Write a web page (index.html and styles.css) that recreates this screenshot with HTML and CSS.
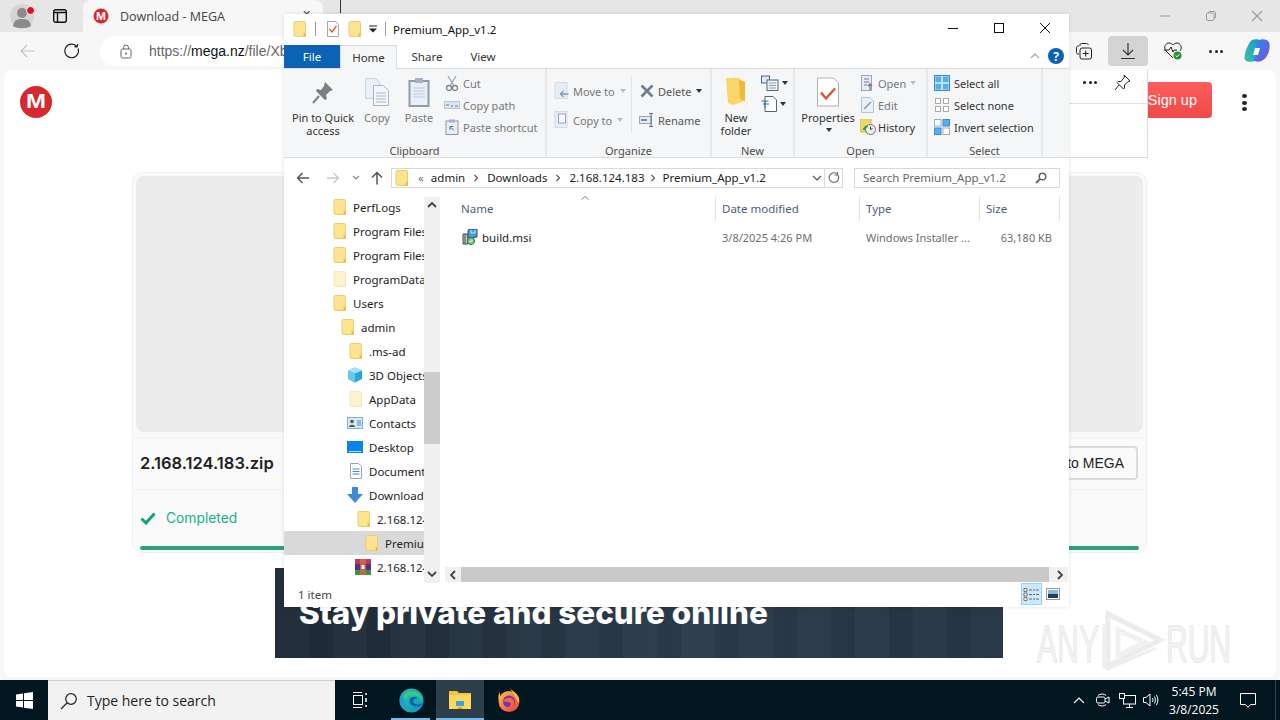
FILE: index.html
```html
<!DOCTYPE html>
<html lang="en">
<head>
<meta charset="utf-8">
<title>Download - MEGA</title>
<link rel="stylesheet" href="styles.css">
</head>
<body>
<svg class="defs" width="0" height="0">
  <symbol id="folder" viewBox="0 0 14 16"><path d="M1 1.500C1 1 1.400.6 2 .6h9.500c.6 0 1 .4 1 1V15.400H2c-.6 0-1-.4-1-1z" fill="#fde48f" stroke="#eccb74"/><path d="M10.500 15.400V12.500l2-1v3.900z" fill="#e8b94c"/></symbol>
  <symbol id="folderlight" viewBox="0 0 14 16"><path d="M1 1.500C1 1 1.400.6 2 .6h9.500c.6 0 1 .4 1 1V15.400H2c-.6 0-1-.4-1-1z" fill="#fff3cf" stroke="#f4e4b8"/></symbol>
  <symbol id="chev" viewBox="0 0 8 8"><path d="M2.500 1l3 3-3 3" fill="none" stroke="#555" stroke-width="1.200"/></symbol>
</svg>

<div class="browser">
  <header class="tabstrip">
    <div class="profile">
      <svg width="26" height="26" viewBox="0 0 26 26"><circle cx="13" cy="13" r="12" fill="#d4d4d4"/><circle cx="13" cy="10" r="5" fill="#8a8a8a"/><path d="M4 23c1-6 4-7 9-7s8 1 9 7c-5 3-13 3-18 0z" fill="#8a8a8a"/></svg>
      <span class="profile-dot"></span>
    </div>
    <svg class="tabs-icon" width="16" height="16" viewBox="0 0 16 16"><rect x="1.700" y="1.700" width="12.600" height="12.600" rx="2" fill="none" stroke="#111" stroke-width="1.400"/><path d="M1.700 4.500h12.600M5.500 4.500v9.500" stroke="#111" stroke-width="1.400"/></svg>
    <div class="tab">
      <svg width="16" height="16" viewBox="0 0 16 16"><circle cx="8" cy="8" r="7.500" fill="#d9272e"/><text x="3" y="11.500" textLength="10" lengthAdjust="spacingAndGlyphs" class="m-small">M</text></svg>
      <span class="tab-title">Download - MEGA</span>
      <span class="tab-close">✕</span>
    </div>
    <span class="tab-sep"></span>
    <div class="wincontrols">
      <svg width="12" height="12" viewBox="0 0 12 12"><path d="M1 6h10" stroke="#9a9a9a"/></svg>
      <svg width="12" height="12" viewBox="0 0 12 12"><rect x="1.500" y="3" width="7.500" height="7.500" rx="1.500" fill="none" stroke="#9a9a9a"/><path d="M3.500 3V2.500c0-.6.400-1 1-1h4.500c1 0 1.500.5 1.500 1.500v4.500c0 .6-.4 1-1 1" fill="none" stroke="#9a9a9a"/></svg>
      <svg width="12" height="12" viewBox="0 0 12 12"><path d="M1 1l10 10M11 1L1 11" stroke="#9a9a9a" stroke-width="1.100"/></svg>
    </div>
  </header>

  <nav class="toolbar">
    <svg class="tb-back" width="16" height="14" viewBox="0 0 16 14"><path d="M15 7H1M7 1L1 7l6 6" fill="none" stroke="#c4c4c4" stroke-width="1.200"/></svg>
    <svg class="tb-reload" width="16" height="16" viewBox="0 0 16 16"><path d="M13.500 3.500V.9M13.500 3.800h-3M14 5.500A6.800 6.800 0 1 1 12.800 3.500" fill="none" stroke="#222" stroke-width="1.200"/></svg>
    <div class="omnibox">
      <svg width="12" height="15" viewBox="0 0 12 15"><rect x="1" y="5" width="10" height="9" rx="1.500" fill="none" stroke="#666"/><path d="M3.500 5V3.500a2.500 2.500 0 0 1 5 0V5" fill="none" stroke="#666"/><circle cx="6" cy="9.500" r="1" fill="#666"/></svg>
      <span class="url"><span class="url-dim">https://</span>mega.nz<span class="url-dim">/file/XbExample</span></span>
    </div>
    <div class="tb-right">
      <svg class="tb-coll" width="18" height="18" viewBox="0 0 18 18"><path d="M5 4V3c0-1 .6-1.500 1.500-1.500h5c1 0 1.500.5 2 1.500M4 12H3c-1 0-1.500-.6-1.500-1.500v-5C1.500 4.500 2.500 4 4 4" fill="none" stroke="#222"/><rect x="5" y="6" width="11.500" height="11" rx="2" fill="none" stroke="#222"/><path d="M10.700 8.500v6M7.700 11.500h6" stroke="#222"/></svg>
      <div class="tb-dl"><svg width="16" height="18" viewBox="0 0 16 18"><path d="M8 1v12M3 8l5 5 5-5M1 16.500h14" fill="none" stroke="#333" stroke-width="1.200"/></svg></div>
      <svg class="tb-health" width="20" height="20" viewBox="0 0 20 20"><path d="M10 17L3 10C0 6 3 2 6 2c2 0 3 1 4 2 1-1 2-2 4-2 3 0 6 4 3 8" fill="none" stroke="#222"/><path d="M1 9h5l2-3 2 5 1-2h3" fill="none" stroke="#222"/><circle cx="14.500" cy="14.500" r="4" fill="#2f8f3f"/><path d="M12.700 14.500l1.300 1.300 2.300-2.500" fill="none" stroke="#fff"/></svg>
      <span class="dots"><i></i><i></i><i></i></span>
      <svg class="tb-copilot" width="26" height="24" viewBox="0 0 26 24"><defs><linearGradient id="cpa" x1="0" y1="1" x2="1" y2="0"><stop offset="0" stop-color="#36c5a0"/><stop offset="1" stop-color="#1a8fe0"/></linearGradient><linearGradient id="cpb" x1="0" y1="0" x2="1" y2="1"><stop offset="0" stop-color="#2a8ee8"/><stop offset="1" stop-color="#7a4ee0"/></linearGradient></defs><path d="M8 1c3-1 7-1 9 1l-4 18c-1 3-10 4-12 1-2-4 3-17 7-20z" fill="url(#cpa)"/><path d="M14 2c3-3 9-2 11 1 2 6-1 15-6 18-2 2-7 2-9 1z" fill="url(#cpb)"/><path d="M11 9h5l-2 7H9z" fill="#fff"/></svg>
    </div>
  </nav>

  <main class="page">
    <div class="page-head">
      <svg class="logo" width="32" height="32" viewBox="0 0 32 32"><circle cx="16" cy="16" r="16" fill="#d9272e"/><text x="6" y="22" textLength="20" lengthAdjust="spacingAndGlyphs" class="m-big">M</text></svg>
      <div class="head-right">
        <button class="signup">Sign up</button>
        <span class="kebab"><i></i><i></i><i></i></span>
      </div>
    </div>

    <section class="card">
      <div class="preview"></div>
      <div class="file-row">
        <strong class="filename">2.168.124.183.zip</strong>
        <button class="import">Import to MEGA</button>
      </div>
      <div class="status-row">
        <svg width="16" height="13" viewBox="0 0 16 13"><path d="M1.500 6.500l4.500 4.500 8.500-9.500" fill="none" stroke="#10a37f" stroke-width="3"/></svg>
        <span class="completed">Completed</span>
      </div>
      <div class="progress"></div>
    </section>

    <section class="ad">
      <h2>Stay private and secure online</h2>
    </section>

    <svg class="watermark" width="210" height="66" viewBox="0 0 210 66">
      <g class="wm-text">
        <text x="1" y="54" textLength="62" lengthAdjust="spacingAndGlyphs">ANY</text>
        <text x="130" y="54" textLength="65" lengthAdjust="spacingAndGlyphs">RUN</text>
      </g>
      <path d="M72 6v52l52-26z" fill="none" stroke="#ececec" stroke-width="5"/>
      <path d="M82 22v26l26-14z" fill="none" stroke="#f1f1f1" stroke-width="5"/>
      <path d="M68 16v44M70 62l50-22" fill="none" stroke="#eee" stroke-width="3"/>
    </svg>

    <aside class="dl-flyout">
      <div class="fly-head">
        <span class="dots small"><i></i><i></i><i></i></span>
        <svg width="17" height="17" viewBox="0 0 17 17"><path d="M10 1l6 6-2 .5-3.500 3.500v3l-1 1-6.500-6.500 1-1h3L10.500 3z" fill="none" stroke="#222"/><path d="M5 11l-4 5" stroke="#222"/></svg>
      </div>
    </aside>
  </main>
</div>

<footer class="taskbar">
  <div class="start"><svg width="17" height="17" viewBox="0 0 17 17"><path d="M0 2.500l7-1v6.500H0zM8 1.300L17 0v8H8zM0 9h7v6.500l-7-1zM8 9h9v8l-9-1.300z" fill="#fff"/></svg></div>
  <div class="search">
    <svg width="18" height="18" viewBox="0 0 18 18"><circle cx="11" cy="7" r="5.300" fill="none" stroke="#222" stroke-width="1.200"/><path d="M7 11l-6 6" stroke="#222" stroke-width="1.200"/></svg>
    <span>Type here to search</span>
  </div>
  <div class="task-icons">
    <div class="task-btn tv"><svg width="16" height="16" viewBox="0 0 16 16"><path d="M1 .5h9M1 15.500h9" stroke="#fff"/><rect x="1.500" y="3.500" width="9" height="9" fill="none" stroke="#fff"/><path d="M14 1v2M14 6v4M14 13v2" stroke="#fff" stroke-width="1.500"/></svg></div>
    <div class="task-btn running edge"><svg width="25" height="25" viewBox="0 0 26 26"><defs><linearGradient id="ega" x1="0" y1="0" x2="1" y2="1"><stop offset="0" stop-color="#2fd07d"/><stop offset="1" stop-color="#0f8fd6"/></linearGradient></defs><circle cx="13" cy="13" r="12.500" fill="url(#ega)"/><path d="M25 15c-1 4-6 5-9 4-5-1-7-6-3-9 2-1 5-1 6 1-5-1-6 5-1 6 3 .5 6-.5 7-2z" fill="#0b5fb5"/><path d="M1 12C2 4 11 0 18 3c4 2 7 6 7 10-2-4-7-7-12-5-5 1-8 8-5 14C4 21 0 17 1 12z" fill="#1a9fd9"/><path d="M5 7c4-5 12-5 16-1 3 3 4 6 3 8-2-5-7-7-11-6-3 .5-6 3-6.500 6C5 12 4 9 5 7z" fill="#35c98a"/></svg></div>
    <div class="task-btn active"><svg width="24" height="22" viewBox="0 0 24 22"><path d="M1 2h8l2 2h12v16H1z" fill="#f4c33f"/><path d="M1 6h22v14H1z" fill="#fbd75b"/><rect x="8" y="12" width="8" height="5" fill="#3f9fe0"/><rect x="10" y="18" width="4" height="2" fill="#e8a020"/></svg></div>
    <div class="task-btn ff"><svg width="24" height="24" viewBox="0 0 24 24"><defs><linearGradient id="ffa" x1="0" y1="0" x2="1" y2="1"><stop offset="0" stop-color="#ffc43a"/><stop offset="1" stop-color="#f0304a"/></linearGradient></defs><circle cx="12" cy="13.500" r="10.500" fill="url(#ffa)"/><path d="M13 0c2 3 6 4 8 8 2 3 1 6 0 7-1-4-5-9-8-15zM3 4c0 3 0 5 1 7L2 13C1 10 1 7 3 4z" fill="#ffb52e"/><circle cx="12" cy="13.500" r="6" fill="#6e33c4"/><path d="M6 13c2-3 6-4 8-3 3 1 4 5 2 8-2 2-6 3-8 1 3 1 6-1 6-3 0-2-3-2-8-3z" fill="#f76a34"/></svg></div>
  </div>
  <div class="tray">
    <svg width="12" height="8" viewBox="0 0 12 8"><path d="M1 7l5-5 5 5" fill="none" stroke="#fff" stroke-width="1.100"/></svg>
    <svg width="14" height="16" viewBox="0 0 14 16"><path d="M2 3.500a6 6 0 0 1 8 0M2 12.500a6 6 0 0 0 8 0" fill="none" stroke="#fff"/><rect x=".5" y="5" width="8.500" height="6" rx="1.500" fill="none" stroke="#fff"/><path d="M9 7l4-2v6l-4-2" fill="none" stroke="#fff"/></svg>
    <svg width="17" height="15" viewBox="0 0 17 15"><rect x="4.500" y="2.500" width="12" height="8.500" fill="none" stroke="#fff"/><path d="M10.500 11v3M7 14.500h7" stroke="#fff"/><rect x=".5" y=".5" width="5" height="5" fill="#021620" stroke="#fff"/></svg>
    <svg width="16" height="14" viewBox="0 0 16 14"><path d="M.5 4.500h2.500L7 1v12L3 9.500H.5z" fill="none" stroke="#fff"/><path d="M9.500 5c.7 1.300.7 2.700 0 4M11.500 3.500c1.200 2.200 1.200 4.800 0 7M13.500 2c1.800 3.200 1.800 6.800 0 10" fill="none" stroke="#fff"/></svg>
  </div>
  <div class="clock"><span>5:45 PM</span><span>3/8/2025</span></div>
  <div class="notif"><svg width="16" height="15" viewBox="0 0 16 15"><path d="M.5.500h15v11h-5L8 14.300 5.500 11.500h-5z" fill="none" stroke="#fff"/></svg></div>
</footer>

<div class="explorer">
  <div class="titlebar">
    <svg class="ti" width="14" height="16"><use href="#folder"/></svg>
    <span class="qa-sep"></span>
    <svg class="qa-check" width="14" height="16" viewBox="0 0 14 16"><path d="M1.500.5h8l3 3v12h-11z" fill="#fff" stroke="#a8a8a8"/><path d="M3.500 8l2.500 3 4.500-6" fill="none" stroke="#d9552f" stroke-width="1.300"/></svg>
    <svg class="ti qa-folder" width="14" height="16"><use href="#folder"/></svg>
    <svg class="qa-caret" width="8" height="8" viewBox="0 0 8 8"><path d="M0 1h8" stroke="#222"/><path d="M0 3.500h8L4 7.500z" fill="#222"/></svg>
    <span class="qa-sep"></span>
    <span class="win-title">Premium_App_v1.2</span>
    <div class="win-btns">
      <svg width="12" height="12" viewBox="0 0 12 12"><path d="M1 6.500h10" stroke="#111"/></svg>
      <svg width="12" height="12" viewBox="0 0 12 12"><rect x="1.500" y="1.500" width="9" height="9" fill="none" stroke="#111"/></svg>
      <svg width="12" height="12" viewBox="0 0 12 12"><path d="M1 1l10 10M11 1L1 11" stroke="#111"/></svg>
    </div>
  </div>

  <div class="ribbon-tabs">
    <span class="rt file">File</span>
    <span class="rt home">Home</span>
    <span class="rt share">Share</span>
    <span class="rt view">View</span>
    <svg class="collapse" width="10" height="6" viewBox="0 0 10 6"><path d="M1 5l4-4 4 4" fill="none" stroke="#aaa" stroke-width="1.300"/></svg>
    <span class="help">?</span>
  </div>

  <div class="ribbon">
    <div class="group g-clip">
      <div class="g-body">
        <div class="big pin">
          <svg width="24" height="26" viewBox="0 0 24 26"><path d="M14 2l8 8-3 1-4 4 1 4-2 1-9-9 1-2 4 1 3-4z" fill="#7b7f85"/><path d="M8 16l-6 7" stroke="#7b7f85" stroke-width="2"/></svg>
          <span>Pin to Quick<br>access</span>
        </div>
        <div class="big copy dim">
          <svg width="26" height="30" viewBox="0 0 26 30"><path d="M1.500 1.500h10l4 4v16h-14z" fill="#eaf0f7" stroke="#c9d3de"/><path d="M9.500 8.500h10l5 5v15h-15z" fill="#f4f7fb" stroke="#a9b6c5"/><path d="M12 16h10M12 19h10M12 22h10M12 25h10" stroke="#a9b6c5"/></svg>
          <span>Copy</span>
        </div>
        <div class="big paste dim">
          <svg width="22" height="30" viewBox="0 0 22 30"><rect x="1.500" y="4" width="19" height="25" fill="#e8eff8" stroke="#8d9bab" stroke-width="2"/><rect x="7" y="1" width="8" height="5" fill="#a7b3c1"/><path d="M5 11h12M5 14h12M5 17h12M5 20h12" stroke="#b9cbe0"/></svg>
          <span>Paste</span>
        </div>
        <div class="smalls s-clip">
          <div class="sm dim"><svg width="14" height="16" viewBox="0 0 14 16"><path d="M3 1l5.500 9M11 1L5.500 10" stroke="#9aa5b1" stroke-width="1.300"/><circle cx="4" cy="13" r="2.500" fill="none" stroke="#7a8694" stroke-width="1.300"/><circle cx="10" cy="13" r="2.500" fill="none" stroke="#7a8694" stroke-width="1.300"/></svg><span>Cut</span></div>
          <div class="sm dim"><svg width="16" height="10" viewBox="0 0 16 10"><rect x=".5" y="1.500" width="15" height="7" fill="#dbe6f2" stroke="#b8c5d3"/><path d="M2 5h3M7 6h2M11 6h3" stroke="#778" stroke-width="1.200"/></svg><span>Copy path</span></div>
          <div class="sm dim"><svg width="14" height="16" viewBox="0 0 14 16"><rect x="1" y="2" width="12" height="13.500" fill="#e7eef7" stroke="#8a98a8"/><rect x="4" y=".5" width="6" height="3" fill="#a7b3c1"/><path d="M5 11V7.500h3M6 8.500l3 3" fill="none" stroke="#4a6a90"/></svg><span>Paste shortcut</span></div>
        </div>
      </div>
      <div class="g-label">Clipboard</div>
    </div>

    <div class="group g-org">
      <div class="g-body">
        <div class="smalls two s-org1">
          <div class="sm dim"><svg width="15" height="18" viewBox="0 0 15 18"><rect x=".5" y=".5" width="12" height="16" fill="#e7edf5" stroke="#d4dce6"/><path d="M14 12H6M9 9l-3 3 3 3" fill="none" stroke="#7f9bbd" stroke-width="1.300"/></svg><span>Move to</span><i class="caret light"></i></div>
          <div class="sm dim"><svg width="15" height="18" viewBox="0 0 15 18"><rect x=".5" y=".5" width="12" height="16" fill="#e7edf5" stroke="#d4dce6"/><rect x="4" y="3" width="7" height="9" fill="#f5f7fa" stroke="#99a7b7"/></svg><span>Copy to</span><i class="caret light"></i></div>
        </div>
        <span class="inner-sep"></span>
        <div class="smalls two s-org2">
          <div class="sm semi"><svg width="14" height="14" viewBox="0 0 14 14"><path d="M1.500 1.500l11 11M12.500 1.500l-11 11" stroke="#6e7f92" stroke-width="2.600"/></svg><span>Delete</span><i class="caret"></i></div>
          <div class="sm semi"><svg width="16" height="14" viewBox="0 0 16 14"><rect x=".5" y="3.500" width="12" height="7" fill="#e2e9f2" stroke="#9aa8b8"/><path d="M12 .5v13M10 .5h4M10 13.500h4" stroke="#5f7088"/><path d="M2 7h6" stroke="#5f7088" stroke-width="1.500"/></svg><span>Rename</span></div>
        </div>
      </div>
      <div class="g-label">Organize</div>
    </div>

    <div class="group g-new">
      <div class="g-body">
        <div class="big newf">
          <svg width="22" height="28" viewBox="0 0 22 28"><path d="M1 0h13l3 3h3v20l-12 4-5-2z" fill="#fcd569"/><path d="M14 2l6 2v19l-5-2z" fill="#f0b83f"/></svg>
          <span>New<br>folder</span>
        </div>
        <div class="new-smalls">
          <div class="ns"><svg width="18" height="16" viewBox="0 0 18 16"><rect x=".5" y="1" width="8" height="7" fill="#dfe9f3" stroke="#53647a"/><rect x="6" y="5" width="11" height="10.500" fill="#eef3f8" stroke="#53647a"/><path d="M8 8h7M8 10.500h7M8 13h7" stroke="#91a0b1"/></svg><i class="caret"></i></div>
          <div class="ns"><svg width="16" height="16" viewBox="0 0 16 16"><path d="M4 .5h8l3.500 3.500v11.500H4z" fill="#fff" stroke="#53647a"/><path d="M.5 5h7M2 8h6M4 5v7" stroke="#2a70b8"/></svg><i class="caret"></i></div>
        </div>
      </div>
      <div class="g-label">New</div>
    </div>

    <div class="group g-open">
      <div class="g-body">
        <div class="big props">
          <svg width="22" height="29" viewBox="0 0 22 29"><path d="M.5.500h16l5 5v23H.5z" fill="#fff" stroke="#b0b0b0"/><path d="M4 15l5 6 9-10" fill="none" stroke="#d9552f" stroke-width="2.400"/></svg>
          <span>Properties</span>
          <i class="caret mid"></i>
        </div>
        <div class="smalls s-open">
          <div class="sm dim"><svg width="14" height="16" viewBox="0 0 14 16"><rect x=".5" y=".5" width="10" height="15" fill="#e5ecf4" stroke="#9aa8b8"/><path d="M3 4h5M3 7h5M3 10h3" stroke="#6d7e92"/><path d="M9 15V9M7 11l2-2 2 2" fill="none" stroke="#6d7e92" stroke-width="1.300"/></svg><span>Open</span><i class="caret light"></i></div>
          <div class="sm dim"><svg width="14" height="16" viewBox="0 0 14 16"><path d="M.5.500h8.500l3.500 3.500v11.500H.5z" fill="#eaf0f7" stroke="#b6c2cf"/><path d="M3 12l7-7" stroke="#8296ad" stroke-width="1.500"/></svg><span>Edit</span></div>
          <div class="sm"><svg width="16" height="16" viewBox="0 0 16 16"><rect x="0" y="0" width="11" height="13" fill="#f0d76c" stroke="#d3b94f"/><circle cx="10.500" cy="10.500" r="5" fill="#e8eef0" stroke="#6a7684"/><path d="M3.500 11a7 7 0 0 1 4-4" fill="none" stroke="#2f9d42" stroke-width="2"/><path d="M10.500 7.500v3l2-1" fill="none" stroke="#444"/></svg><span>History</span></div>
        </div>
      </div>
      <div class="g-label">Open</div>
    </div>

    <div class="group g-sel">
      <div class="g-body">
        <div class="smalls s-sel">
          <div class="sm"><svg width="16" height="16" viewBox="0 0 16 16"><rect x=".5" y=".5" width="15" height="15" fill="#bfe0f9" stroke="#3a8cd0"/><rect x="1.500" y="1.500" width="5.500" height="5.500" fill="#55aef0"/><rect x="9" y="1.500" width="5.500" height="5.500" fill="#55aef0"/><rect x="1.500" y="9" width="5.500" height="5.500" fill="#55aef0"/><rect x="9" y="9" width="5.500" height="5.500" fill="#55aef0"/></svg><span>Select all</span></div>
          <div class="sm"><svg width="16" height="16" viewBox="0 0 16 16"><rect x="1.500" y="1.500" width="5" height="5" fill="#fff" stroke="#aaa"/><rect x="9.500" y="1.500" width="5" height="5" fill="#fff" stroke="#aaa"/><rect x="1.500" y="9.500" width="5" height="5" fill="#fff" stroke="#aaa"/><rect x="9.500" y="9.500" width="5" height="5" fill="#fff" stroke="#aaa"/></svg><span>Select none</span></div>
          <div class="sm"><svg width="16" height="16" viewBox="0 0 16 16"><rect x="9" y=".5" width="6.500" height="6.500" fill="#55aef0" stroke="#3a8cd0"/><rect x=".5" y="9" width="6.500" height="6.500" fill="#55aef0" stroke="#3a8cd0"/><rect x=".5" y=".5" width="6.500" height="6.500" fill="#fff" stroke="#8bb4d8"/><rect x="9" y="9" width="6.500" height="6.500" fill="#fff" stroke="#aaa"/></svg><span>Invert selection</span></div>
        </div>
      </div>
      <div class="g-label">Select</div>
    </div>
  </div>

  <div class="addr-row">
    <svg class="nav-back" width="14" height="12" viewBox="0 0 14 12"><path d="M13 6H1.500M6.500 1l-5 5 5 5" fill="none" stroke="#555" stroke-width="1.400"/></svg>
    <svg class="nav-fwd" width="14" height="12" viewBox="0 0 14 12"><path d="M1 6h11.500M7.500 1l5 5-5 5" fill="none" stroke="#c8c8c8" stroke-width="1.400"/></svg>
    <svg class="nav-down" width="8" height="6" viewBox="0 0 8 6"><path d="M1 1l3 3 3-3" fill="none" stroke="#888" stroke-width="1.200"/></svg>
    <svg class="nav-up" width="12" height="14" viewBox="0 0 12 14"><path d="M6 13.500V1.500M1 6.500l5-5 5 5" fill="none" stroke="#555" stroke-width="1.500"/></svg>
    <div class="addr">
      <svg width="14" height="16"><use href="#folder"/></svg>
      <span class="crumb-more">«</span>
      <span>admin</span><svg class="c" width="8" height="8"><use href="#chev"/></svg>
      <span>Downloads</span><svg class="c" width="8" height="8"><use href="#chev"/></svg>
      <span>2.168.124.183</span><svg class="c c-last" width="8" height="8"><use href="#chev"/></svg>
      <span>Premium_App_v1.2</span>
      <svg class="addr-drop" width="10" height="6" viewBox="0 0 10 6"><path d="M1 1l4 4 4-4" fill="none" stroke="#555" stroke-width="1.200"/></svg>
      <span class="addr-refresh"><svg width="12" height="13" viewBox="0 0 12 13"><path d="M9.500 1v3h-3M10 4a4.800 4.800 0 1 1-1.500-1.500" fill="none" stroke="#666" stroke-width="1.100"/></svg></span>
    </div>
    <div class="searchbox">
      <span>Search Premium_App_v1.2</span>
      <svg width="12" height="12" viewBox="0 0 12 12"><circle cx="7.500" cy="4.500" r="3.300" fill="none" stroke="#666" stroke-width="1.500"/><path d="M5 7l-4 4" stroke="#666" stroke-width="1.800"/></svg>
    </div>
  </div>

  <div class="body">
    <div class="tree">
      <div class="tr l0"><svg width="14" height="16"><use href="#folder"/></svg><span>PerfLogs</span></div>
      <div class="tr l0"><svg width="14" height="16"><use href="#folder"/></svg><span>Program Files</span></div>
      <div class="tr l0"><svg width="14" height="16"><use href="#folder"/></svg><span>Program Files</span></div>
      <div class="tr l0"><svg width="14" height="16"><use href="#folderlight"/></svg><span>ProgramData</span></div>
      <div class="tr l0"><svg width="14" height="16"><use href="#folder"/></svg><span>Users</span></div>
      <div class="tr l1"><svg width="14" height="16"><use href="#folder"/></svg><span>admin</span></div>
      <div class="tr l2"><svg width="14" height="16"><use href="#folder"/></svg><span>.ms-ad</span></div>
      <div class="tr l2w"><svg width="16" height="16" viewBox="0 0 16 16"><path d="M8 .5l7 3v8.500l-7 3.500-7-3.500V3.500z" fill="#2aa5d6"/><path d="M1 3.500l7 3 7-3-7-3z" fill="#a7e3f5"/><path d="M1 3.500l7 3v9l-7-3.500z" fill="#62c9e8"/></svg><span>3D Objects</span></div>
      <div class="tr l2"><svg width="14" height="16"><use href="#folderlight"/></svg><span>AppData</span></div>
      <div class="tr l2w"><svg width="16" height="12" viewBox="0 0 16 12"><rect x=".5" y=".5" width="15" height="11" fill="#d4e8f7" stroke="#7fb2d9"/><circle cx="5" cy="4.500" r="1.800" fill="#555"/><path d="M2 10c0-3 6-3 6 0z" fill="#555"/><path d="M10 4h4M10 6h4M10 8h4" stroke="#3f8fd0"/></svg><span>Contacts</span></div>
      <div class="tr l2w"><svg width="16" height="12" viewBox="0 0 16 12"><rect x="0" y="0" width="16" height="12" fill="#0a84e8"/><path d="M2 10.500h12" stroke="#bfe0f9"/></svg><span>Desktop</span></div>
      <div class="tr l2"><svg width="14" height="16" viewBox="0 0 14 16"><path d="M1.500.5h8l3 3v12h-11z" fill="#fff" stroke="#9aa5b1"/><path d="M3.500 6h7M3.500 8.500h7M3.500 11h7" stroke="#3f8fd0"/></svg><span>Document</span></div>
      <div class="tr l2w"><svg width="16" height="16" viewBox="0 0 16 16"><path d="M5 0h6v7h5l-8 9-8-9h5z" fill="#3d8bd8"/></svg><span>Download</span></div>
      <div class="tr l3"><svg width="14" height="16"><use href="#folder"/></svg><span>2.168.124.183</span></div>
      <div class="tr l4 sel"><svg width="14" height="16"><use href="#folder"/></svg><span>Premium_App_v1.2</span></div>
      <div class="tr l3w"><svg width="16" height="16" viewBox="0 0 16 16"><rect width="16" height="5" fill="#b53a66"/><rect y="5" width="16" height="6" fill="#5a2f86"/><rect y="11" width="16" height="5" fill="#3a8f4a"/><rect x="5" width="6" height="16" fill="#d96a3a" opacity=".8"/><rect x="6.500" y="6" width="3" height="4" fill="#fff"/></svg><span>2.168.124.183.zip</span></div>
    </div>
    <div class="vscroll">
      <svg width="10" height="6" viewBox="0 0 10 6"><path d="M1 5l4-4 4 4" fill="none" stroke="#444" stroke-width="1.800"/></svg>
      <div class="vthumb"></div>
      <svg width="10" height="6" viewBox="0 0 10 6"><path d="M1 1l4 4 4-4" fill="none" stroke="#444" stroke-width="1.800"/></svg>
    </div>
    <div class="list">
      <div class="list-head">
        <span class="h-name">Name<svg class="sort" width="8" height="4" viewBox="0 0 8 4"><path d="M.5 3.500L4 .5l3.500 3" fill="none" stroke="#888"/></svg></span>
        <span class="h-date">Date modified</span>
        <span class="h-type">Type</span>
        <span class="h-size">Size</span>
      </div>
      <div class="list-row">
        <span class="c-name">
          <svg width="16" height="16" viewBox="0 0 16 16"><path d="M1 5h5v10H1z" fill="#c4c4c4" stroke="#444"/><path d="M3 5v10" stroke="#555"/><path d="M6 1l3-1h6v8l-6 1H6z" fill="#3e9fd8" stroke="#35506e"/><path d="M9 1v3h4V1" fill="none" stroke="#cfe6f5"/><circle cx="9" cy="12" r="3.500" fill="#7fd08a" stroke="#2d7a3c"/><path d="M7.500 12l1 1 2-2" fill="none" stroke="#fff"/></svg>
          build.msi
        </span>
        <span class="c-date">3/8/2025 4:26 PM</span>
        <span class="c-type">Windows Installer ...</span>
        <span class="c-size">63,180 KB</span>
      </div>
      <div class="hscroll">
        <svg width="6" height="10" viewBox="0 0 6 10"><path d="M5 1L1 5l4 4" fill="none" stroke="#444" stroke-width="1.800"/></svg>
        <div class="hthumb"></div>
        <svg width="6" height="10" viewBox="0 0 6 10"><path d="M1 1l4 4-4 4" fill="none" stroke="#444" stroke-width="1.800"/></svg>
      </div>
    </div>
  </div>

  <div class="statusbar">
    <span>1 item</span>
    <div class="views">
      <span class="vw on"><svg width="17" height="15" viewBox="0 0 17 15"><path d="M1 1.500h3v3H1zM1 6h3v3H1zM1 10.500h3v3H1z" fill="#fff" stroke="#777"/><path d="M6 3h3M10 3h2M13 3h3M6 7.500h3M10 7.500h2M13 7.500h3M6 12h3M10 12h2M13 12h3" stroke="#667"/></svg></span>
      <span class="vw"><svg width="14" height="12" viewBox="0 0 14 12"><rect x=".5" y=".5" width="13" height="11" fill="#fff" stroke="#8a9aa8"/><rect x="2" y="2" width="10" height="4" fill="#8dbbe0"/><rect x="2" y="6" width="10" height="4" fill="#2a3d50"/></svg></span>
    </div>
  </div>
</div>
</body>
</html>
```
FILE: styles.css
```css
* { box-sizing: border-box; }
html, body { margin: 0; padding: 0; }
body {
  width: 1280px; height: 720px; overflow: hidden; position: relative;
  font-family: "Open Sans", "Noto Sans", sans-serif; font-size: 12px; color: #222;
  background: #f7f7f7;
}
svg { display: block; flex: none; }
.defs { position: absolute; }
button { font-family: inherit; }

/* Browser */
.browser { height: 680px; display: flex; flex-direction: column; }
.tabstrip { height: 32px; background: #e6e6e6; display: flex; align-items: center; position: relative; }
.profile { width: 26px; height: 26px; margin-left: 9px; position: relative; }
.profile-dot { position: absolute; left: 18px; top: 4px; width: 7px; height: 7px; border-radius: 50%; background: #e0101a; border: 1px solid #f6f6f6; box-sizing: content-box; margin: -1px; }
.tabs-icon { margin-left: 17px; }
.tab {
  margin-left: 15px; width: 240px; height: 32px; background: #f7f7f7;
  border-radius: 8px 8px 0 0; display: flex; align-items: center; padding-left: 10px; gap: 11px;
}
.tab-title { font-size: 12.500px; color: #444; }
.tab-close { font-size: 11px; color: #444; margin-left: 66px; margin-top: -6px; }
.tab-sep { width: 1px; height: 13px; background: #333; margin: -19px 0 0 17px; }
.wincontrols { margin-left: auto; width: 104px; margin-right: 17px; display: flex; justify-content: space-between; }
.m-small { font: 700 10px "Liberation Sans", sans-serif; fill: #fff; }
.m-big { font: 700 20px "Liberation Sans", sans-serif; fill: #fff; }

.toolbar { height: 38px; background: #f7f7f7; display: flex; align-items: center; }
.tb-back { margin-left: 20px; }
.tb-reload { margin-left: 28px; }
.omnibox {
  margin-left: 20px; width: 970px; height: 30px; background: #fff; border-radius: 15px;
  display: flex; align-items: center; padding-left: 20px; gap: 17px;
}
.url { font-family: "Liberation Sans", sans-serif; font-size: 14px; color: #111; }
.url-dim { color: #666; }
.tb-right { flex: 1; display: flex; align-items: center; position: relative; padding-left: 5px; }
.tb-coll { margin-left: 0; }
.tb-dl { width: 40px; height: 30px; margin-left: 15px; background: #d4d4d4; border-radius: 4px; display: flex; align-items: center; justify-content: center; }
.tb-health { margin-left: 15px; }
.dots { display: inline-flex; gap: 2.500px; margin-left: 26px; }
.dots i { width: 3px; height: 3px; border-radius: 50%; background: #222; }
.tb-copilot { margin-left: 21px; }

.page { flex: 1; margin: 0 4px 3px; background: #fff; border-radius: 8px 8px 6px 6px; position: relative; overflow: hidden; }
.page-head { height: 88px; padding: 16px 29px 0 16px; display: flex; justify-content: space-between; }
.head-right { display: flex; gap: 30px; align-items: flex-start; margin-top: -4px; }
.signup {
  width: 79px; height: 36px; border: 0; border-radius: 4px; padding: 0;
  background: linear-gradient(#ff5d5d, #f04848); color: #fff;
  font-family: "Liberation Sans", sans-serif; font-size: 14.500px; text-align: right; padding-right: 15px;
}
.kebab { display: flex; flex-direction: column; gap: 2.500px; margin-top: 12px; }
.kebab i { width: 5px; height: 4px; border-radius: 50%; background: #222; }

.card {
  margin: 14px 0 0 128px; width: 1015px; height: 381px; background: #fafafa;
  border: 1px solid #f0f0f0; border-radius: 10px; padding: 3px; display: flex; flex-direction: column;
}
.preview { height: 256px; background: #ececec; border-radius: 8px; flex: none; }
.file-row {
  margin: 5px -3px 0; height: 53px; flex: none; border-top: 1px solid #f1f1f1; border-bottom: 1px solid #f1f1f1;
  display: flex; align-items: center; justify-content: space-between; padding: 0 8px 2px 7px;
}
.filename { font-family: Inter, "Liberation Sans", sans-serif; font-size: 16.500px; font-weight: 600; color: #222; }
.import {
  height: 34px; padding: 0 12px; background: #fafafa; border: 2px solid #dcdcdc; border-radius: 4px;
  font-family: "Liberation Sans", sans-serif; font-size: 14px; color: #222;
}
.status-row { height: 56px; flex: none; padding: 0 5px 0 4px; display: flex; align-items: center; gap: 10px; }
.completed { font-family: Inter, sans-serif; font-size: 13.800px; color: #14b08a; }
.progress { height: 4px; margin: 0 4px; background: #2aa37d; border-radius: 2px; flex: none; }

.ad {
  margin: 15px 0 0 271px; width: 728px; height: 90px; overflow: hidden;
  background:
    repeating-linear-gradient(90deg, rgba(255,255,255,.02) 0 34px, rgba(0,0,0,.04) 34px 58px),
    linear-gradient(90deg, #1f2a37, #2c3b4b 55%, #263545);
  padding: 28px 0 0 24px;
}
.ad h2 { margin: 0; font-family: Inter, sans-serif; font-weight: 800; font-size: 31.400px; line-height: 34px; color: #fff; white-space: nowrap; }

.watermark { position: absolute; left: 1032px; top: 538px; }
.wm-text { font: 400 52px "Liberation Sans", sans-serif; fill: #f3f3f3; stroke: #e6e6e6; stroke-width: 1; }

.dl-flyout {
  position: absolute; right: 128px; top: 0; width: 150px; height: 88px; background: #fff;
  border-right: 1px solid #dcdcdc; border-bottom: 1px solid #dcdcdc; 
}
.fly-head { height: 34px; border-bottom: 1px solid #e0e0e0; display: flex; align-items: center; justify-content: flex-end; gap: 17px; padding: 0 16px 8px 0; }
.dots.small { margin: 0; }

/* Taskbar */
.taskbar { height: 40px; background: #021620; display: flex; align-items: center; position: relative; }
.start { width: 48px; height: 40px; display: flex; align-items: center; justify-content: center; }
.search {
  width: 287px; height: 40px; background: #f2f2f2; border-top: 1px solid #cfcfcf;
  display: flex; align-items: center; padding-left: 12px; gap: 9px;
  font-family: "Open Sans", sans-serif; font-size: 14px; color: #222;
}
.task-icons { display: flex; margin-left: 1px; gap: 1px; }
.task-btn { width: 48px; height: 40px; display: flex; align-items: center; justify-content: center; position: relative; }
.tv { margin-right: 2px; }
.running::after, .active::after { content: ""; position: absolute; left: 4px; right: 5px; bottom: 0; height: 2px; background: #76b9ed; }
.active { background: #2c3e4a; }
.active::after { left: 0; right: 0; }
.tray { margin-left: auto; display: grid; grid-template-columns: repeat(4, 24px); justify-items: center; align-items: center; width: 96px; }
.clock { width: 50px; margin-left: 6px; margin-right: 1px; display: flex; flex-direction: column; align-items: center; color: #fff; font-size: 12px; line-height: 18px; padding-top: 1px; white-space: nowrap; }
.notif { width: 56px; display: flex; justify-content: center; border-right: 1px solid #33434d; height: 40px; align-items: center; margin-right: 4px; }

/* Explorer (floating window on the desktop) */
.explorer {
  position: absolute; left: 284px; top: 14px; width: 785px; height: 593px; background: #fff;
  display: flex; flex-direction: column; box-shadow: 0 0 4px rgba(0,0,0,.12);
  font-family: "Noto Sans", sans-serif; font-size: 11.500px; color: #333;
}
.titlebar { height: 28px; display: flex; align-items: center; padding: 2px 0 0 9px; flex: none; }
.titlebar .win-btns { margin-top: -2px; }
.qa-sep { width: 1px; height: 14px; background: #9a9a9a; margin: 0 0 0 8px; }
.qa-check { margin-left: 10px; }
.qa-folder { margin-left: 8px; }
.qa-caret { margin-left: 7px; }
.titlebar .qa-sep + .win-title { margin-left: 7px; }
.qa-caret + .qa-sep { margin-left: 8px; }
.win-title { color: #111; font-size: 11.500px; }
.win-btns { margin-left: auto; display: flex; gap: 34px; padding-right: 18px; }

.ribbon-tabs { height: 26px; display: flex; align-items: flex-end; position: relative; flex: none; }
.rt { height: 23px; display: flex; align-items: center; justify-content: center; font-size: 11.500px; color: #333; }
.rt.file { width: 56px; background: #0a63b4; color: #fff; }
.rt.home { width: 57px; background: #f5f6f7; border: 1px solid #dadbdc; border-bottom: 0; height: 24px; position: relative; top: 1px; }
.rt.share { width: 60px; }
.rt.view { width: 52px; }
.collapse { margin-left: auto; margin-right: 8px; margin-bottom: 9px; }
.help { width: 16px; height: 16px; border-radius: 50%; background: #0b62b5; color: #fff; font-weight: 700; font-size: 12px; display: flex; align-items: center; justify-content: center; margin-right: 5px; margin-bottom: 4px; }

.ribbon { height: 90px; flex: none; background: #f5f6f7; border-top: 1px solid #dadbdc; border-bottom: 1px solid #dadbdc; display: flex; }
.group { display: flex; flex-direction: column; border-right: 2px solid #e6e8ea; }
.g-clip { width: 263px; }
.g-org { width: 165px; }
.g-new { width: 83px; }
.g-open { width: 133px; }
.g-sel { width: 115px; }
.g-body { flex: 1; display: flex; min-height: 0; }
.g-label { height: 15px; padding-top: 1px; text-align: center; font-size: 11px; line-height: 15px; color: #4d4d4d; }
.big { display: flex; flex-direction: column; align-items: center; padding-top: 8px; text-align: center; line-height: 13px; font-size: 11px; color: #333; position: relative; }
.big svg { height: 30px; margin-bottom: 4px; }
.big span { display: block; }
.dim, .dim span { color: #777; }
.pin { width: 72px; margin-left: 3px; padding-top: 11px; }
.pin svg { height: 26px; margin-bottom: 5px; }
.copy { width: 40px; margin-left: -2px; }
.paste { width: 44px; }
.smalls { display: flex; flex-direction: column; padding-top: 3px; }
.sm { height: 22px; display: flex; align-items: center; font-size: 11px; gap: 3px; white-space: nowrap; }
.sm > svg { width: 16px; }
.s-clip { margin-left: 3px; }
.s-clip .sm { gap: 3px; }
.s-org1 { margin-left: 7px; width: 77px; }
.smalls.two { padding-top: 11px; gap: 7px; }
.inner-sep { width: 1px; height: 56px; background: #e3e5e7; margin: 8px 7px 0 0; }
.semi span { color: #555; }
.caret { display: inline-block; width: 0; height: 0; border-left: 3.500px solid transparent; border-right: 3.500px solid transparent; border-top: 4px solid #333; margin-left: 2px; }
.caret.light { border-top-color: #bbb; }
.caret.mid { margin-top: 4px; }
.newf { width: 50px; margin-left: -1px; padding-top: 9px; }
.newf svg { height: 28px; margin-bottom: 5px; }
.new-smalls { display: flex; flex-direction: column; gap: 5px; padding: 6px 0 0 0; }
.ns { display: flex; align-items: center; gap: 1px; }
.props { width: 56px; margin-left: 5px; }
.s-open { margin-left: 4px; }
.s-open .sm { gap: 2px; }
.s-sel { margin-left: 6px; }
.s-sel .sm { gap: 4px; color: #333; }

.addr-row { height: 39px; flex: none; display: flex; align-items: center; padding-top: 0; color: #333; }
.nav-back { margin-left: 12px; }
.nav-fwd { margin-left: 16px; }
.nav-down { margin-left: 12px; }
.nav-up { margin-left: 11px; }
.addr {
  margin-left: 8px; width: 452px; height: 20px; border: 1px solid #d9d9d9; display: flex; align-items: center;
  padding-left: 3px; gap: 7px; font-size: 11.500px; color: #222; position: relative;
}
.crumb-more { color: #777; margin-left: 2px; }
.c { margin: 0; }
.c-last { margin: 0 -2px; }
.addr-drop { margin-left: auto; margin-right: 20px; }
.addr-refresh { position: absolute; right: 0; top: 0; bottom: 0; width: 18px; border-left: 1px solid #d9d9d9; display: flex; align-items: center; justify-content: center; }
.searchbox {
  margin-left: 11px; width: 206px; height: 20px; border: 1px solid #d9d9d9; display: flex; align-items: center;
  justify-content: space-between; padding: 0 12px 0 8px; color: #666; font-size: 11.500px;
}

.body { flex: 1; display: flex; min-height: 0; }
.tree { width: 140px; flex: none; display: flex; flex-direction: column; overflow: hidden; margin-top: -2px; }
.tr { height: 24px; flex: none; display: flex; align-items: center; gap: 6px; white-space: nowrap; font-size: 11.500px; color: #222; overflow: hidden; }
.l0 { padding-left: 49px; }
.l1 { padding-left: 57px; }
.l2 { padding-left: 65px; }
.l2w { padding-left: 63px; }
.l3 { padding-left: 73px; }
.l3w { padding-left: 71px; }
.l4 { padding-left: 81px; }
.sel { background: #d9d9d9; }
.vscroll { width: 16px; flex: none; background: #f0f0f0; display: flex; flex-direction: column; align-items: center; padding-top: 5px; position: relative; }
.vthumb { position: absolute; left: 0; top: 175px; width: 16px; height: 72px; background: #cdcdcd; }
.vscroll svg:last-child { position: absolute; bottom: 6px; }

.list { flex: 1; display: flex; flex-direction: column; position: relative; min-width: 0; }
.list-head { height: 25px; margin-top: -2px; display: flex; flex: none; color: #4c607a; font-size: 11.500px; align-items: center; padding-top: 1px; }
.list-head span { height: 25px; display: flex; align-items: center; border-right: 1px solid #e5e5e5; padding-left: 6px; position: relative; }
.h-name { width: 276px; padding-left: 21px !important; }
.h-date { width: 144px; }
.h-type { width: 120px; }
.h-size { width: 80px; }
.sort { position: absolute; left: 141px; top: 0; }
.list-row { height: 34px; display: flex; align-items: center; flex: none; font-size: 11px; color: #6d6d6d; }
.c-name { width: 276px; padding-left: 22px; display: flex; align-items: center; gap: 4px; color: #222; font-size: 11.500px; }
.c-date { width: 144px; padding-left: 6px; }
.c-type { width: 120px; padding-left: 6px; white-space: nowrap; }
.c-size { width: 72px; text-align: right; }
.hscroll { position: absolute; left: 5px; right: 1px; bottom: 1px; height: 15px; background: #f0f0f0; display: flex; align-items: center; justify-content: space-between; padding: 0 5px; }
.hthumb { position: absolute; left: 16px; right: 19px; top: 0; bottom: 0; background: #c9c9c9; }

.statusbar { height: 24px; flex: none; display: flex; align-items: center; justify-content: space-between; padding: 0 0 2px 14px; font-size: 11.500px; color: #444; }
.views { display: flex; align-items: center; gap: 4px; padding-right: 9px; }
.vw { width: 21px; height: 22px; display: flex; align-items: center; justify-content: center; }
.vw + .vw { width: 14px; }
.vw.on { background: #cce8ff; border: 1px solid #99d1ff; }
```
